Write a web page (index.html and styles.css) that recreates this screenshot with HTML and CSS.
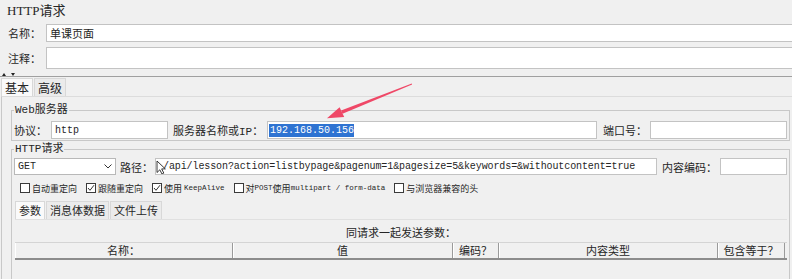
FILE: index.html
```html
<!DOCTYPE html>
<html lang="zh-CN">
<head>
  <meta charset="utf-8">
  <title>HTTP请求</title>
  <link rel="stylesheet" href="styles.css">
</head>
<body>
  <div class="title">HTTP<span>请求</span></div>

  <div class="field-row name-row">
    <label>名称：</label>
    <div class="input">单课页面</div>
  </div>
  <div class="field-row comment-row">
    <label>注释：</label>
    <div class="input"></div>
  </div>

  <div class="splitter"><i class="up"></i><i class="down"></i></div>

  <div class="tabs top-tabs">
    <span class="tab active">基本</span>
    <span class="tab">高级</span>
  </div>

  <div class="panel">
    <fieldset class="group web">
      <legend>Web服务器</legend>
      <div class="line">
        <label class="l-proto">协议：</label>
        <div class="input protocol">http</div>
        <label class="l-host">服务器名称或IP：</label>
        <div class="input host"><span class="selected">192.168.50.156</span></div>
        <label class="l-port">端口号：</label>
        <div class="input port"></div>
      </div>
    </fieldset>

    <fieldset class="group request">
      <legend>HTTP请求</legend>
      <div class="line">
        <div class="select">GET
          <svg width="8" height="5" viewBox="0 0 8 5"><path d="M0.5 0.5 L4 4 L7.5 0.5" fill="none" stroke="#333" stroke-width="1"/></svg>
        </div>
        <label class="l-path">路径：</label>
        <div class="input path">
          <span>/api/lesson?action=listbypage&amp;pagenum=1&amp;pagesize=5&amp;keywords=&amp;withoutcontent=true</span>
          <svg class="cursor" width="10" height="15" viewBox="0 0 10 15"><path d="M1 1 L1 12.5 L3.8 9.8 L6 14 L7.8 13.1 L5.7 8.9 L9.3 8.9 Z" fill="#fff" stroke="#222" stroke-width="0.9" stroke-linejoin="round"/></svg>
        </div>
        <label class="l-enc">内容编码：</label>
        <div class="input encoding"></div>
      </div>

      <div class="checks">
        <span class="check"><i class="box"></i>自动重定向</span>
        <span class="check"><i class="box"><svg width="8" height="8" viewBox="0 0 8 8"><path d="M1 4 L3 6.3 L7 1.2" fill="none" stroke="#333" stroke-width="1"/></svg></i>跟随重定向</span>
        <span class="check"><i class="box"><svg width="8" height="8" viewBox="0 0 8 8"><path d="M1 4 L3 6.3 L7 1.2" fill="none" stroke="#333" stroke-width="1"/></svg></i>使用 <em>KeepAlive</em></span>
        <span class="check"><i class="box"></i>对<em>POST</em>使用<em>multipart / form-data</em></span>
        <span class="check"><i class="box"></i>与浏览器兼容的头</span>
      </div>

      <div class="tabs inner-tabs">
        <span class="tab active">参数</span>
        <span class="tab">消息体数据</span>
        <span class="tab">文件上传</span>
      </div>

      <div class="params">
        <div class="params-title">同请求一起发送参数：</div>
        <div class="table-head">
          <span>名称：</span>
          <span>值</span>
          <span>编码？</span>
          <span>内容类型</span>
          <span>包含等于？</span>
        </div>
      </div>
    </fieldset>
  </div>

  <svg class="arrow" width="792" height="279" viewBox="0 0 792 279">
    <polygon points="412.1,84.4 411.8,83.6 341.1,110.4 342.5,113.8" fill="#ef4867"/>
    <polygon points="327,118.3 339.6,107.2 344.2,117.0" fill="#ef4867"/>
  </svg>
</body>
</html>
```

FILE: styles.css
```css
*, *::before, *::after {
  box-sizing: border-box;
  margin: 0;
  padding: 0;
}

body {
  position: relative;
  width: 792px;
  height: 279px;
  overflow: hidden;
  background-color: #f0f0f0;
  color: #262626;
  font-size: 11px;
  font-family: "Liberation Mono", "Noto Sans CJK SC", monospace;
}

label {
  white-space: nowrap;
}

.title {
  height: 22px;
  padding: 2px 0 0 7px;
  font-size: 13px;
  line-height: 18px;
  font-family: "Liberation Serif", "Noto Sans CJK SC", serif;
}

.field-row {
  display: flex;
  align-items: center;
  padding-left: 8px;
  margin-right: -4px;
}

.field-row label {
  width: 38px;
}

.field-row .input {
  flex: 1;
  height: 100%;
  font-size: 11px;
  font-family: "Noto Sans CJK SC", sans-serif;
}

.name-row {
  height: 18px;
  margin-top: 2px;
}

.comment-row {
  height: 22px;
  margin-top: 5px;
}

.input {
  display: flex;
  align-items: center;
  padding-left: 3px;
  overflow: hidden;
  white-space: nowrap;
  background: #ffffff;
  border: 1px solid #c3c3c3;
  font-size: 10px;
}

.splitter {
  display: flex;
  gap: 5px;
  height: 8px;
  padding: 4px 0 0 2px;
  border-bottom: 1px solid #a0a0a0;
}

.splitter i {
  width: 0;
  height: 0;
  border-left: 2.5px solid transparent;
  border-right: 2.5px solid transparent;
}

.splitter .up {
  border-bottom: 3px solid #222;
}

.splitter .down {
  border-top: 3px solid #222;
}

.tabs {
  display: flex;
  gap: 1px;
}

.tab {
  height: 18px;
  line-height: 17px;
  padding: 0 3px;
  background: #ebebeb;
  border: 1px solid #d8d8d8;
  border-bottom: none;
  font-family: "Noto Sans CJK SC", sans-serif;
}

.tab.active {
  background: #fafafa;
}

.top-tabs {
  height: 19px;
  align-items: flex-end;
  padding-left: 1px;
  font-size: 12px;
}

.panel {
  margin-left: 1px;
  border-left: 1px solid #c8c8c8;
  border-top: 1px solid #dcdcdc;
}

.group {
  margin: 6px 2px 0 9px;
  padding: 0 2px;
  border: 1px solid #c8c8c8;
}

.group legend {
  padding: 0 1px;
  line-height: 14px;
}

.line {
  display: flex;
  align-items: center;
}

.web .line {
  height: 18px;
  margin: 4px 0 1px;
}

.web .line .input {
  height: 18px;
}

.l-proto {
  width: 37px;
}

.protocol {
  width: 117px;
}

.l-host {
  width: 94px;
  margin-left: 5px;
}

.host {
  width: 330px;
  padding-left: 1px;
}

.selected {
  padding: 0 0 0 1px;
  line-height: 13px;
  background: #2e73d2;
  color: #ffffff;
}

.l-port {
  width: 47px;
  margin-left: 6px;
}

.port,
.encoding {
  flex: 1;
}

.request {
  margin-top: 1px;
}

.request .line {
  height: 17px;
  margin-top: 2px;
}

.request .line .input {
  height: 17px;
}

.select {
  display: flex;
  align-items: center;
  justify-content: space-between;
  width: 102px;
  height: 17px;
  padding: 0 3px;
  background: #ffffff;
  border: 1px solid #b8b8b8;
  font-size: 10px;
}

.l-path {
  width: 35px;
  margin-left: 4px;
}

.path {
  position: relative;
  width: 502px;
  padding-left: 7px;
  letter-spacing: -0.1px;
}

.path .cursor {
  position: absolute;
  left: 0;
  top: 1px;
}

.l-enc {
  width: 58px;
  margin-left: 5px;
}

.checks {
  display: flex;
  align-items: center;
  height: 22px;
  margin-top: 2px;
  padding-left: 6px;
  font-size: 9px;
  font-family: "Noto Sans CJK SC", sans-serif;
}

.check {
  display: flex;
  align-items: center;
  margin-right: 9px;
  white-space: pre;
}

.box {
  display: flex;
  align-items: center;
  justify-content: center;
  width: 10px;
  height: 10px;
  margin-right: 2px;
  background: #ffffff;
  border: 1px solid #3a3a3a;
}

.check em {
  font-style: normal;
  font-size: 7.5px;
  font-family: "Liberation Mono", monospace;
}

.inner-tabs {
  height: 18px;
  margin: 2px 0 0 1px;
  align-items: flex-end;
}

.params {
  height: 70px;
  margin-left: 1px;
  border-top: 1px solid #e0e0e0;
  font-family: "Noto Sans CJK SC", sans-serif;
}

.params-title {
  margin-top: 5px;
  line-height: 15px;
  text-align: center;
}

.table-head {
  display: grid;
  grid-template-columns: 218px 220px 46px 219px 67px;
  margin-top: 2px;
  border-top: 1px solid #d4d4d4;
  border-bottom: 2px solid #8c8c8c;
}

.table-head span {
  height: 15px;
  line-height: 15px;
  text-align: center;
  border-right: 1px solid #9a9a9a;
  box-shadow: inset 1px 0 #ffffff;
}

.arrow {
  position: absolute;
  left: 0;
  top: 0;
  pointer-events: none;
}
```
